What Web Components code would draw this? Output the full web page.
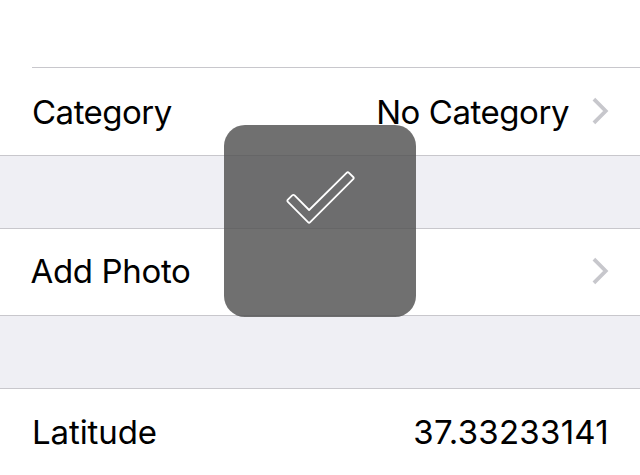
<!DOCTYPE html>
<html lang="en"><head><meta charset="utf-8"><style>html,body{margin:0;height:100%;overflow:hidden;background:#fff}</style></head><body><settings-screen></settings-screen>
<script>
class ListRow extends HTMLElement{
 constructor(){super();const chev=this.hasAttribute('chevron');
 this.attachShadow({mode:'open'}).innerHTML=`<style>
 :host{display:flex;box-sizing:border-box;align-items:center;justify-content:space-between;padding:0 32px;background:#fff;color:#000;font:33px/40px Inter,sans-serif;white-space:nowrap}
 .t{display:flex;align-items:center}.l{letter-spacing:var(--ls,-0.5px);padding-bottom:var(--lift,0)}.v{letter-spacing:var(--vs,-0.45px)}
 svg{display:block;margin:0 -1px 1px 22px}
 </style><span class="l"><slot></slot></span><span class="t"><span class="v"><slot name="value"></slot></span>${chev?'<svg width="18" height="28" viewBox="0 0 18 28"><path d="M2.9 2.2 14.7 14 2.9 25.8" fill="none" stroke="#c7c7cc" stroke-width="3.8"/></svg>':''}</span>`}
}
customElements.define('list-row',ListRow);
class DoneHud extends HTMLElement{
 constructor(){super();this.attachShadow({mode:'open'}).innerHTML=`<style>
 :host{position:absolute;left:224px;top:125px;width:192px;height:192px;border-radius:21px;background:rgba(80,80,80,.82)}
 svg{display:block;margin:45px 0 0 61px}
 </style><svg width="72" height="56" viewBox="0 0 72 56"><path d="M2.9 29.6 7.2 25.4Q8.4 24.4 9.6 25.4L24.1 40 61.6 2.8Q62.8 1.7 64 2.8L68.2 7Q69.3 8.1 68.2 9.2L25.2 52.2Q24.1 53.3 23 52.2L2.9 31.8Q1.8 30.7 2.9 29.6Z" fill="none" stroke="#fff" stroke-width="1.8" stroke-linejoin="round"/></svg>`}
}
customElements.define('done-hud',DoneHud);
class SettingsScreen extends HTMLElement{
 constructor(){super();this.attachShadow({mode:'open'}).innerHTML=`<style>
 :host{display:block;position:relative;width:640px;height:475px;overflow:hidden;background:#fff}
 .top{height:67px;margin-left:32px;border-bottom:1px solid #c8c7cc}
 .gap{box-sizing:border-box;height:74px;background:#efeff4;border:solid #c8c7cc;border-width:1px 0}
 list-row{height:87px}
 .photo{height:86px;padding-left:30.5px;padding-bottom:1px;--ls:-.35px;--lift:2px}
 .lat{--ls:-.1px;--vs:.27px;padding-bottom:1px;padding-right:31px}
 </style><div class="top"></div>
 <list-row chevron>Category<span slot="value">No Category</span></list-row><div class="gap"></div>
 <list-row chevron class="photo">Add Photo</list-row><div class="gap"></div>
 <list-row class="lat">Latitude<span slot="value">37.33233141</span></list-row><done-hud></done-hud>`}
}
customElements.define('settings-screen',SettingsScreen);
</script></body></html>
